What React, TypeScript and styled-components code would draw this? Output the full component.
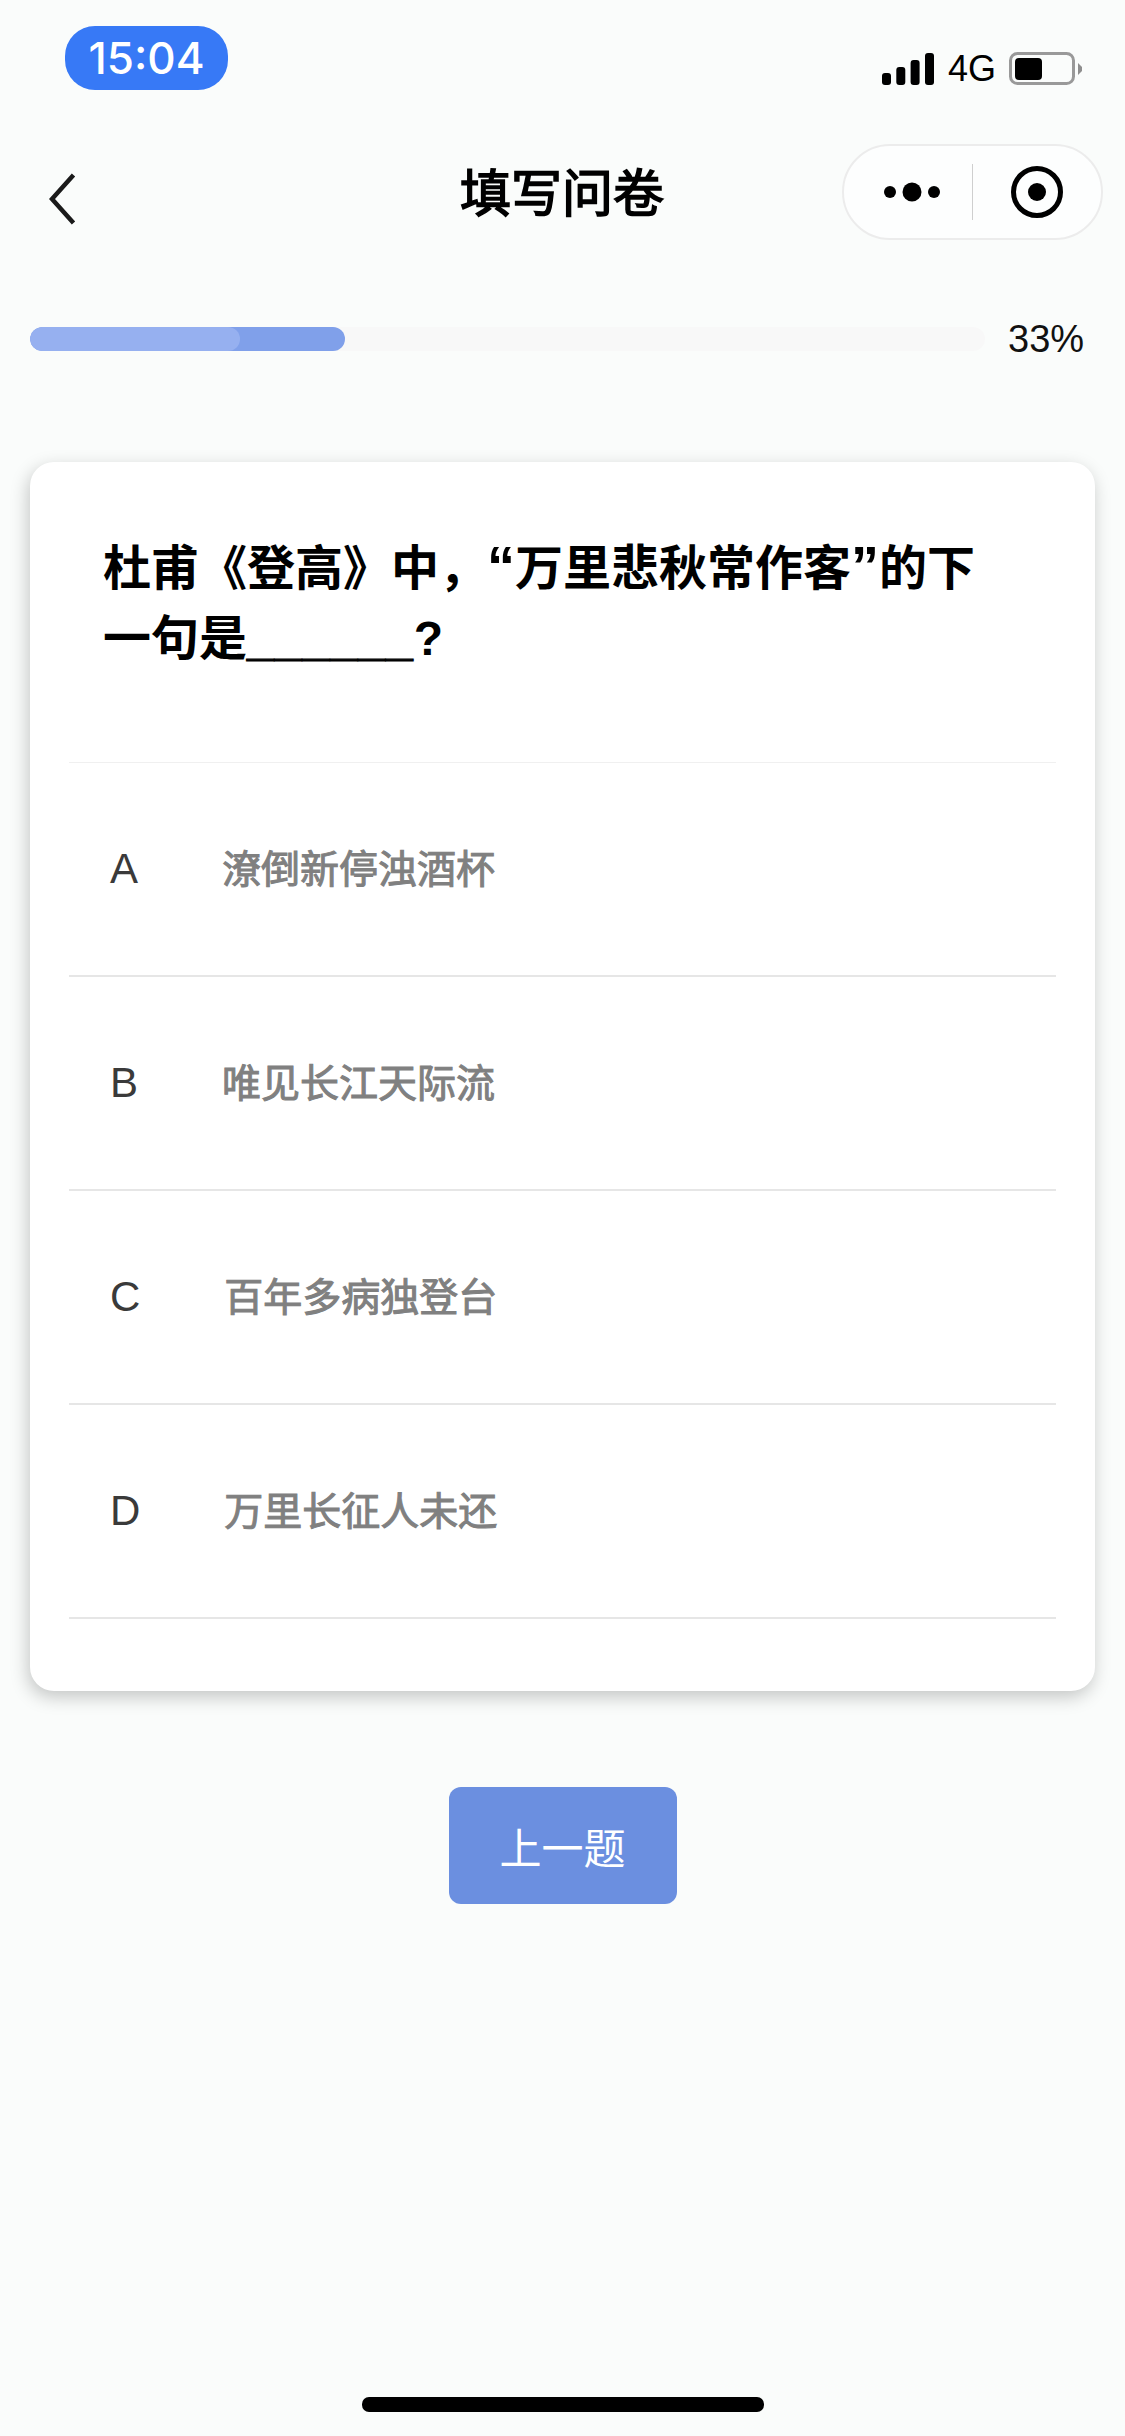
import React from "react";
import styled, { createGlobalStyle } from "styled-components";

const Global = createGlobalStyle`
  html, body { margin: 0; padding: 0; background: #fafcfb; }
  * { box-sizing: border-box; }
  body { font-family: "Liberation Sans", "Noto Sans CJK SC", sans-serif; color: #000; }
`;

const Page = styled.div`
  width: 1125px;
  height: 2436px;
  background: #fafcfb;
  display: flex;
  flex-direction: column;
  overflow: hidden;
`;

const StatusBar = styled.div`
  height: 144px;
  padding: 26px 43px 0 65px;
  display: flex;
  justify-content: space-between;
  align-items: flex-start;
`;

const TimePill = styled.div`
  width: 163px;
  height: 64px;
  border-radius: 30px;
  background: #3779f6;
  color: #fff;
  font-family: Inter, "Liberation Sans", sans-serif;
  font-size: 44px;
  font-weight: 500;
  line-height: 64px;
  text-align: center;
`;

const StatusRight = styled.div`
  margin-top: 26px;
  display: flex;
  align-items: center;
  height: 34px;
`;

const NetworkLabel = styled.span`
  font-size: 36px;
  line-height: 34px;
  margin: 0 13px 0 14px;
`;

const NavBar = styled.div`
  display: grid;
  grid-template-columns: 1fr auto 1fr;
  align-items: center;
  padding: 0 22px 0 49px;
  height: 95px;
`;

const BackIcon = styled.svg`
  display: block;
  width: 28px;
  height: 52px;
  margin-top: 13px;
`;

const Title = styled.div`
  font-size: 51px;
  font-weight: 400;
  line-height: 60px;
  color: #000;
  -webkit-text-stroke: 1.6px #000;
  transform: translate(-14px, 3px);
`;

const Capsule = styled.div`
  justify-self: end;
  width: 261px;
  height: 96px;
  border: 2px solid #ececec;
  border-radius: 48px;
  background: #fdfefe;
  display: flex;
  align-items: center;
`;

const CapsuleCell = styled.div`
  flex: 1;
  display: flex;
  justify-content: center;
  align-items: center;
`;

const MoreDots = styled.svg`
  display: block;
  margin-left: 7px;
`;

const CapsuleDivider = styled.div`
  width: 1px;
  height: 56px;
  background: #cfcfcf;
`;

const ProgressRow = styled.div`
  margin-top: 82px;
  padding: 0 30px;
  display: flex;
  align-items: center;
`;

const Track = styled.div`
  position: relative;
  width: 955px;
  height: 24px;
  border-radius: 12px;
  background: #f8f8f8;
  overflow: hidden;
`;

const TrackFill = styled.div<{ $width: number; $color: string }>`
  position: absolute;
  left: 0;
  top: 0;
  bottom: 0;
  width: ${(p) => p.$width}px;
  border-radius: 12px;
  background: ${(p) => p.$color};
`;

const Percent = styled.span`
  margin-left: 23px;
  font-size: 38px;
  line-height: 36px;
  color: #111;
`;

const Card = styled.div`
  margin: 105px 30px 0;
  height: 1229px;
  padding: 0 39px;
  background: #fff;
  border-radius: 24px;
  box-shadow: -2px 6px 18px rgba(0, 0, 0, 0.22);
`;

const QuestionBlock = styled.div`
  height: 301px;
  padding: 72px 0 0 34px;
  border-bottom: 1px solid #f0f0f0;
`;

const QuestionLine = styled.div`
  font-size: 48px;
  font-weight: 700;
  line-height: 70px;
  white-space: nowrap;
`;

const Run = styled.span``;

const QuoteMark = styled.span`
  font-size: 56px;
  line-height: 0;
`;

const Blank = styled.span`
  letter-spacing: 1.1px;
  -webkit-text-stroke: 1.2px #000;
`;

const OptionRow = styled.div`
  height: 214px;
  padding-left: 41px;
  display: flex;
  align-items: center;
  border-bottom: 2px solid #e6e6e6;
`;

const OptionLetter = styled.span`
  font-size: 42px;
  color: #3a3a3a;
  margin-right: 84px;
`;

const OptionText = styled.span`
  font-size: 39px;
  font-weight: 400;
  color: #808080;
  -webkit-text-stroke: 1px #808080;
  margin-bottom: 6px;
`;

const PrevButton = styled.button`
  align-self: center;
  margin-top: 96px;
  width: 228px;
  height: 117px;
  border: 0;
  border-radius: 12px;
  background: #6b8fe0;
  color: #fff;
  font-family: inherit;
  font-size: 42px;
  font-weight: 400;
  padding: 0;
`;

const HomeBar = styled.div`
  align-self: center;
  margin-top: auto;
  margin-bottom: 24px;
  width: 402px;
  height: 15px;
  border-radius: 7px;
  background: #000;
`;

const options = [
  ["A", "潦倒新停浊酒杯"],
  ["B", "唯见长江天际流"],
  ["C", "百年多病独登台"],
  ["D", "万里长征人未还"],
];

export default function App() {
  return (
    <Page>
      <Global />
      <StatusBar>
        <TimePill>15:04</TimePill>
        <StatusRight>
          <svg width="52" height="33" viewBox="0 0 52 33">
            <rect x="0" y="20" width="9" height="12" rx="3" fill="#000" />
            <rect x="14.3" y="14" width="9" height="18" rx="3" fill="#000" />
            <rect x="28.6" y="7" width="9" height="25" rx="3" fill="#000" />
            <rect x="43" y="0" width="9" height="32" rx="3" fill="#000" />
          </svg>
          <NetworkLabel>4G</NetworkLabel>
          <svg width="73" height="34" viewBox="0 0 73 34">
            <rect x="1.5" y="1.5" width="63" height="30" rx="7" fill="none" stroke="#999" strokeWidth="3" />
            <rect x="6" y="6" width="27" height="22" rx="4" fill="#000" />
            <path d="M69 11 L73 15 V19 L69 23 Z" fill="#8e8e8e" />
          </svg>
        </StatusRight>
      </StatusBar>
      <NavBar>
        <BackIcon viewBox="0 0 28 52">
          <path d="M24.5 2 L3 26 L24.5 50" fill="none" stroke="#1a1a1a" strokeWidth="4.5" />
        </BackIcon>
        <Title>填写问卷</Title>
        <Capsule>
          <CapsuleCell>
            <MoreDots width="56" height="22" viewBox="0 0 56 22">
              <circle cx="6" cy="11" r="6" fill="#000" />
              <circle cx="28" cy="11" r="9.5" fill="#000" />
              <circle cx="50" cy="11" r="6" fill="#000" />
            </MoreDots>
          </CapsuleCell>
          <CapsuleDivider />
          <CapsuleCell>
            <svg width="52" height="52" viewBox="0 0 52 52">
              <circle cx="26" cy="26" r="23.5" fill="none" stroke="#000" strokeWidth="5" />
              <circle cx="26" cy="26" r="9" fill="#000" />
            </svg>
          </CapsuleCell>
        </Capsule>
      </NavBar>
      <ProgressRow>
        <Track>
          <TrackFill $width={315} $color="#80a0ea" />
          <TrackFill $width={210} $color="#96b0f0" />
        </Track>
        <Percent>33%</Percent>
      </ProgressRow>
      <Card>
        <QuestionBlock>
          <QuestionLine>
            <Run>杜甫《登高》中，</Run>
            <QuoteMark>“</QuoteMark>
            <Run>万里悲秋常作客</Run>
            <QuoteMark>”</QuoteMark>
            <Run>的下</Run>
          </QuestionLine>
          <QuestionLine>
            <Run>一句是</Run>
            <Blank>______</Blank>
            <Run>?</Run>
          </QuestionLine>
        </QuestionBlock>
        {options.map(([letter, text]) => (
          <OptionRow key={letter}>
            <OptionLetter>{letter}</OptionLetter>
            <OptionText>{text}</OptionText>
          </OptionRow>
        ))}
      </Card>
      <PrevButton>上一题</PrevButton>
      <HomeBar />
    </Page>
  );
}
